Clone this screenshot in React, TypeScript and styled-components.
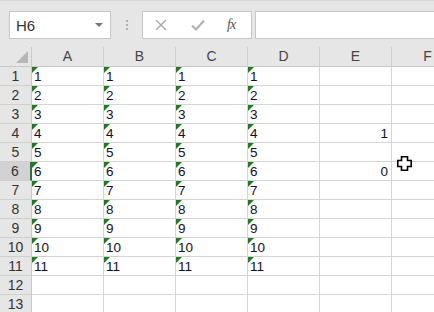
import styled, { createGlobalStyle } from "styled-components";

const GlobalStyle = createGlobalStyle`
  html, body {
    margin: 0;
    padding: 0;
    background: #ffffff;
    overflow: hidden;
  }
  body {
    font-family: "Liberation Sans", Arial, sans-serif;
  }
`;

const Sheet = styled.div`
  width: 434px;
  height: 312px;
  overflow: hidden;
  background: #ffffff;
`;

const Toolbar = styled.div`
  height: 47px;
  box-sizing: border-box;
  border-top: 1px solid #d6d6d6;
  background: #e6e6e6;
  display: flex;
  align-items: flex-start;
  padding: 10px 0 0 9px;
`;

const NameBox = styled.div`
  width: 102px;
  height: 28px;
  box-sizing: border-box;
  background: #fff;
  border: 1px solid #c6c6c6;
  display: flex;
  align-items: center;
  justify-content: space-between;
  padding: 0 7px 0 6px;
  font-size: 15px;
  color: #333;
`;

const Caret = styled.span`
  width: 0;
  height: 0;
  border-left: 4px solid transparent;
  border-right: 4px solid transparent;
  border-top: 4px solid #777;
`;

const Grip = styled.div`
  width: 31px;
  height: 28px;
  display: flex;
  flex-direction: column;
  align-items: center;
  justify-content: center;
  gap: 2px;
`;

const GripDot = styled.span`
  width: 2px;
  height: 2px;
  background: #b0b0b0;
`;

const FormulaButtons = styled.div`
  width: 110px;
  height: 28px;
  box-sizing: border-box;
  background: #fff;
  border: 1px solid #c6c6c6;
  display: flex;
  align-items: center;
  padding: 0 0 0 12px;
`;

const IconSlot = styled.span<{ $w: number }>`
  width: ${(p) => p.$w}px;
  display: flex;
  align-items: center;
  justify-content: flex-start;
`;

const Fx = styled.span`
  font-family: "Liberation Serif", "Times New Roman", serif;
  font-style: italic;
  font-size: 14px;
  color: #555;
  letter-spacing: -1px;
`;

const FormulaInput = styled.div`
  flex: 1;
  height: 28px;
  margin-left: 3px;
  box-sizing: border-box;
  background: #fff;
  border: 1px solid #c6c6c6;
  border-right: none;
`;

const Grid = styled.div`
  display: grid;
  grid-template-columns: 32px repeat(6, 72px);
  grid-template-rows: 20px;
  grid-auto-rows: 19px;
`;

const Corner = styled.div`
  background: #e6e6e6;
  border-right: 1px solid #c8c8c8;
  border-bottom: 1px solid #c8c8c8;
  box-sizing: border-box;
  position: relative;
  &::after {
    content: "";
    position: absolute;
    right: 3px;
    bottom: 3px;
    width: 0;
    height: 0;
    border-left: 12px solid transparent;
    border-bottom: 12px solid #b6b6b6;
  }
`;

const ColHead = styled.div`
  background: #e6e6e6;
  border-right: 1px solid #cfcfcf;
  border-bottom: 1px solid #c8c8c8;
  box-sizing: border-box;
  display: flex;
  align-items: flex-end;
  justify-content: center;
  padding-bottom: 2px;
  font-size: 14px;
  color: #444;
`;

const RowHead = styled.div<{ $active?: boolean }>`
  background: ${(p) => (p.$active ? "#d2d2d2" : "#e6e6e6")};
  border-bottom: 1px solid #cfcfcf;
  border-right: ${(p) => (p.$active ? "2px solid #217346" : "1px solid #c8c8c8")};
  box-sizing: border-box;
  display: flex;
  align-items: flex-end;
  justify-content: center;
  padding-bottom: 1px;
  font-size: 14px;
  color: #333;
`;

const Cell = styled.div<{ $flag?: boolean; $right?: boolean }>`
  position: relative;
  border-right: 1px solid #d4d4d4;
  border-bottom: 1px solid #d4d4d4;
  box-sizing: border-box;
  display: flex;
  align-items: flex-end;
  justify-content: ${(p) => (p.$right ? "flex-end" : "flex-start")};
  padding: 0 3px 1px 2px;
  font-size: 13.5px;
  color: #10102a;
  &::before {
    content: "";
    display: ${(p) => (p.$flag ? "block" : "none")};
    position: absolute;
    left: 0;
    top: 0;
    width: 0;
    height: 0;
    border-top: 6px solid #1e7b1e;
    border-right: 6px solid transparent;
  }
`;

const Cursor = styled.svg`
  position: absolute;
  left: 5px;
  top: -6px;
`;

const cols = ["A", "B", "C", "D", "E", "F"];
const rows = Array.from({ length: 13 }, (_, i) => i + 1);

function cellValue(r: number, c: number): { text: string; flag: boolean; right: boolean } {
  if (c < 4 && r <= 11) return { text: String(r), flag: true, right: false };
  if (c === 4 && r === 4) return { text: "1", flag: false, right: true };
  if (c === 4 && r === 6) return { text: "0", flag: false, right: true };
  return { text: "", flag: false, right: false };
}

export default function App() {
  return (
    <Sheet>
      <GlobalStyle />
      <Toolbar>
        <NameBox>
          <span>H6</span>
          <Caret />
        </NameBox>
        <Grip>
          <GripDot />
          <GripDot />
          <GripDot />
        </Grip>
        <FormulaButtons>
          <IconSlot $w={36}>
            <svg width="12" height="12" viewBox="0 0 12 12">
              <path d="M1 1 L11 11 M11 1 L1 11" stroke="#a8a8a8" strokeWidth="1.4" fill="none" />
            </svg>
          </IconSlot>
          <IconSlot $w={36}>
            <svg width="14" height="12" viewBox="0 0 14 12">
              <path d="M1 6.5 L5 10.5 L13 1.5" stroke="#b0b0b0" strokeWidth="2" fill="none" />
            </svg>
          </IconSlot>
          <IconSlot $w={20}>
            <Fx>fx</Fx>
          </IconSlot>
        </FormulaButtons>
        <FormulaInput />
      </Toolbar>
      <Grid>
        <Corner />
        {cols.map((c) => (
          <ColHead key={c}>{c}</ColHead>
        ))}
        {rows.map((r) => [
          <RowHead key={`h${r}`} $active={r === 6}>
            {r}
          </RowHead>,
          ...cols.map((c, ci) => {
            const v = cellValue(r, ci);
            return (
              <Cell key={`${c}${r}`} $flag={v.flag} $right={v.right}>
                {v.text}
                {r === 6 && ci === 5 && (
                  <Cursor width="15" height="15" viewBox="0 0 15 15">
                    <path
                      d="M4.5 0.8 H10.5 V4.5 H14.2 V10.5 H10.5 V14.2 H4.5 V10.5 H0.8 V4.5 H4.5 Z"
                      fill="#fff"
                      stroke="#000"
                      strokeWidth="1.6"
                    />
                  </Cursor>
                )}
              </Cell>
            );
          }),
        ])}
      </Grid>
    </Sheet>
  );
}
